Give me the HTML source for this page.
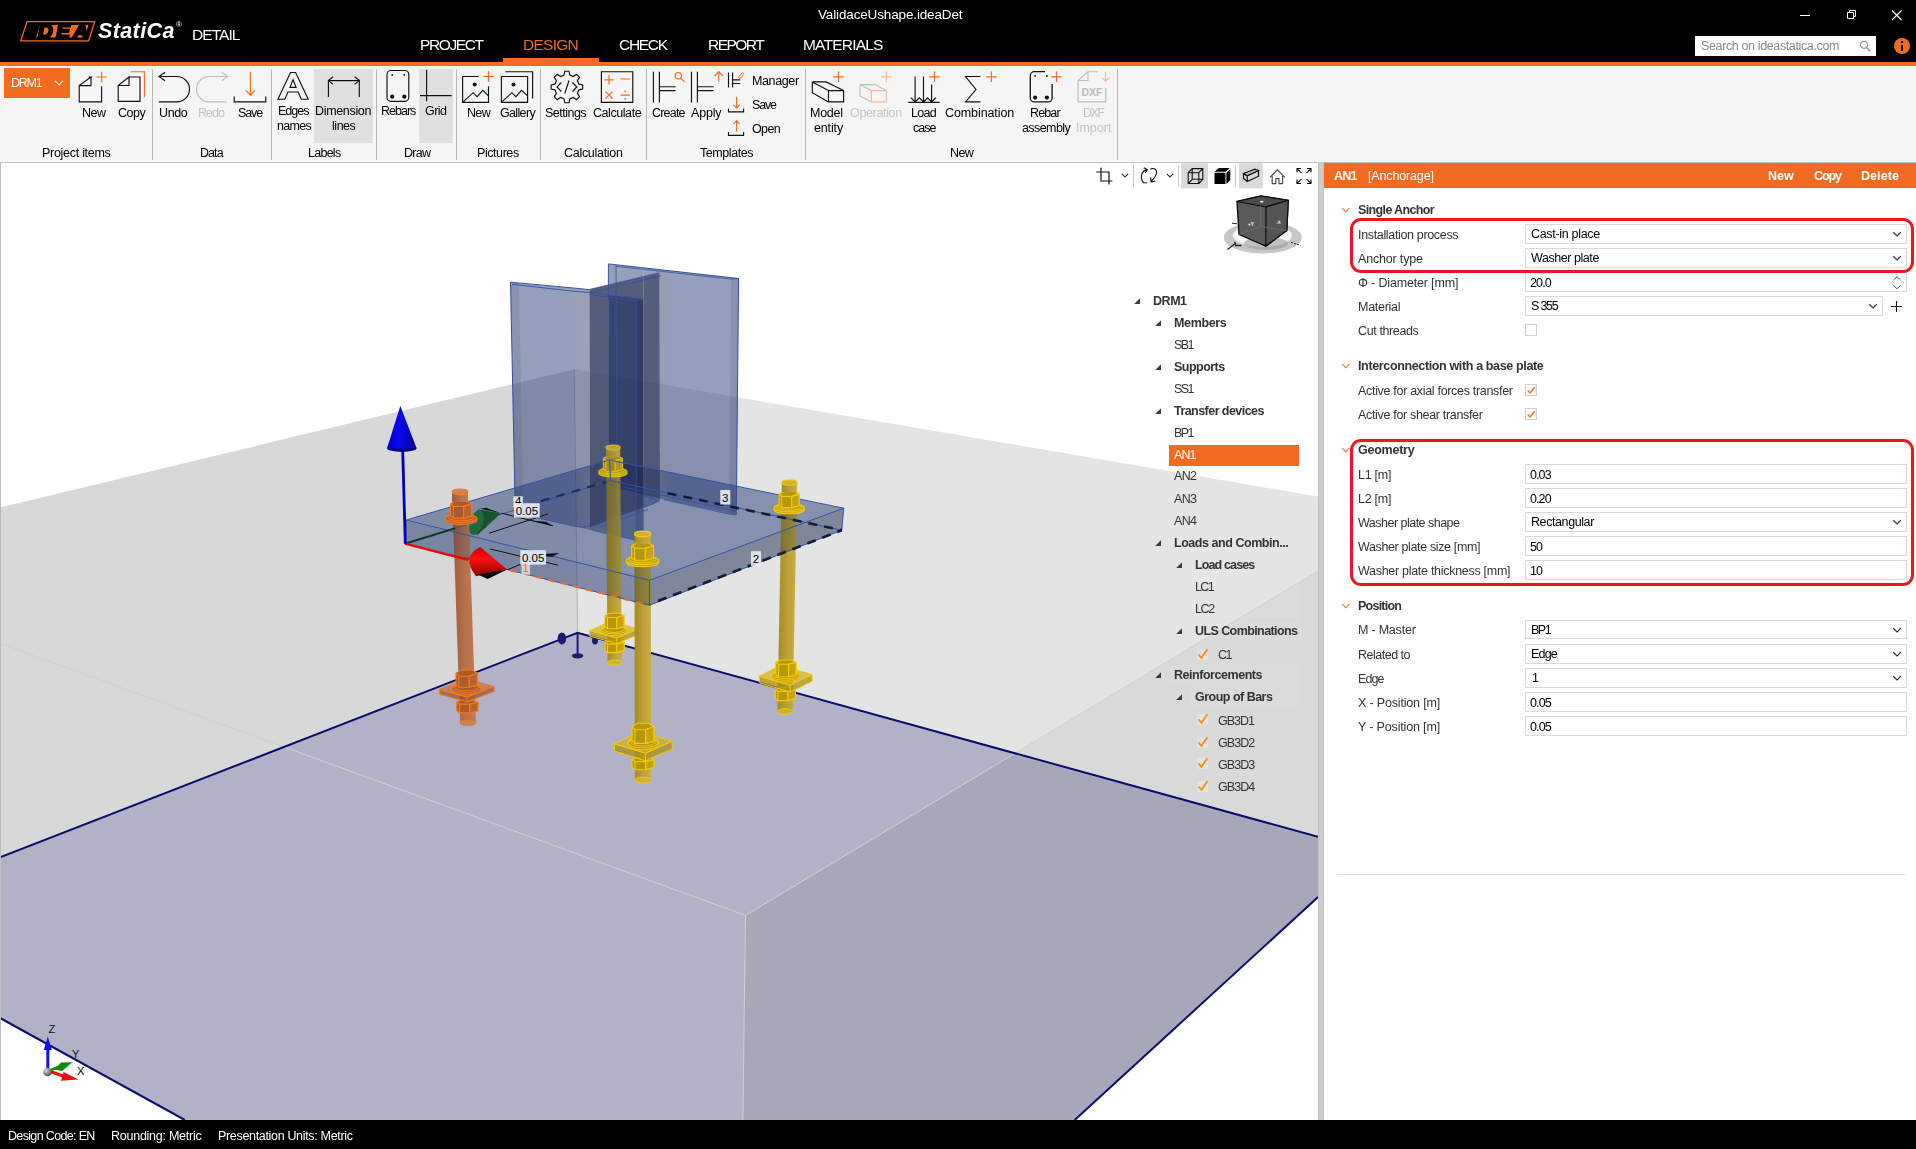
<!DOCTYPE html>
<html><head><meta charset="utf-8"><title>ValidaceUshape.ideaDet</title>
<style>
html,body{margin:0;padding:0;}
body{width:1916px;height:1149px;position:relative;overflow:hidden;background:#fff;font-family:"Liberation Sans", sans-serif;}
.t{position:absolute;white-space:nowrap;line-height:20px;height:20px;will-change:transform;}
.a{position:absolute;}
svg{position:absolute;overflow:visible;}
</style></head><body>
<div class="a" style="left:0;top:0;width:1916px;height:62px;background:#000"></div><div class="a" style="left:0;top:62px;width:1916px;height:4px;background:#F26B21"></div><div class="a" style="left:503px;top:58px;width:96px;height:5px;background:#F26B21"></div><div class="a" style="left:0;top:66px;width:1916px;height:95px;background:#F5F5F5"></div><div class="a" style="left:0;top:161px;width:1916px;height:1px;background:#FAFAFA"></div><div class="a" style="left:0;top:162px;width:1916px;height:1px;background:#BEBEBE"></div><div class="a" style="left:0;top:1120px;width:1916px;height:29px;background:#000;z-index:9"></div><div class="a" style="left:1318px;top:162px;width:6px;height:958px;background:#CDCDCD;border-left:1px solid #C2C2C2;border-right:1px solid #C2C2C2;box-sizing:border-box"></div><div class="a" style="left:0;top:163px;width:1px;height:957px;background:#BDBDBD;z-index:5"></div><svg style="left:18px;top:18px" width="80" height="28" viewBox="18 18 80 28">
<polygon points="27,21.600 94.800,21.600 88.600,40.800 20.800,40.800" fill="#000" stroke="#F26B21" stroke-width="1.300" stroke-linejoin="round"/>
<polygon points="40,25 88.500,25 84.500,37.500 36,37.500" fill="#F26B21"/>
</svg><svg style="left:1790px;top:0" width="126" height="32" viewBox="1790 0 126 32">
<path d="M1800 15.5h10" stroke="#fff" stroke-width="1" fill="none"/>
<path d="M1847.5 12.5h6v6h-6z M1849.5 12.5v-2h6v6h-2" stroke="#fff" stroke-width="1" fill="none"/>
<path d="M1892 10.5l9.5 9.5M1901.500 10.5l-9.5 9.5" stroke="#fff" stroke-width="1.1" fill="none"/>
</svg><div class="a" style="left:1695px;top:36px;width:181px;height:20px;background:#fff"></div><svg style="left:1856px;top:38px" width="18" height="16" viewBox="1856 38 18 16">
<circle cx="1864" cy="44.8" r="3.6" fill="none" stroke="#777" stroke-width="1"/><path d="M1866.700 47.6l3.600 3.700" stroke="#777" stroke-width="1.1"/></svg><div class="a" style="left:1893.600px;top:37.800px;width:16px;height:16px;border-radius:8px;background:#F26B21"></div><div class="a" style="left:1900.800px;top:41.300px;width:1.800px;height:2px;background:#000"></div><div class="a" style="left:1900.800px;top:44.600px;width:1.800px;height:6px;background:#000"></div><div class="a" style="left:4px;top:68px;width:66px;height:30px;background:#F26B21"></div><svg style="left:52px;top:78px" width="14" height="10" viewBox="52 78 14 10"><path d="M55 80.800l4 4 4-4" stroke="#fff" stroke-width="1.1" fill="none"/></svg><div class="a" style="left:151.5px;top:68.500px;width:1px;height:91px;background:#B8B8B8"></div><div class="a" style="left:270.5px;top:68.500px;width:1px;height:91px;background:#B8B8B8"></div><div class="a" style="left:375.9px;top:68.500px;width:1px;height:91px;background:#B8B8B8"></div><div class="a" style="left:455.5px;top:68.500px;width:1px;height:91px;background:#B8B8B8"></div><div class="a" style="left:539.5px;top:68.500px;width:1px;height:91px;background:#B8B8B8"></div><div class="a" style="left:645.5px;top:68.500px;width:1px;height:91px;background:#B8B8B8"></div><div class="a" style="left:804.9px;top:68.500px;width:1px;height:91px;background:#B8B8B8"></div><div class="a" style="left:1116.5px;top:68.500px;width:1px;height:91px;background:#B8B8B8"></div><div class="a" style="left:314px;top:69px;width:59px;height:74px;background:#E0E0E0"></div><div class="a" style="left:419px;top:69px;width:34px;height:74px;background:#E0E0E0"></div><div class="a" style="left:1324px;top:163px;width:592px;height:957px;background:#fff"></div><div class="a" style="left:1324px;top:163px;width:592px;height:25px;background:#F26B21"></div><svg style="left:1340px;top:203.8px" width="12" height="12" viewBox="0 0 12 12"><path d="M2.200 4.200l3.600 3.600 3.600-3.600" stroke="#F26B21" stroke-width="1.1" fill="none"/></svg><div class="a" style="left:1525px;top:224.0px;width:380px;height:17.500px;border:1px solid #DADADA;background:#fff"></div><svg style="left:1891.0px;top:228.0px" width="12" height="12" viewBox="0 0 12 12"><path d="M2.200 4.300l3.800 3.600 3.800-3.600" stroke="#333" stroke-width="1.2" fill="none"/></svg><div class="a" style="left:1525px;top:248.2px;width:380px;height:17.500px;border:1px solid #DADADA;background:#fff"></div><svg style="left:1891.0px;top:252.2px" width="12" height="12" viewBox="0 0 12 12"><path d="M2.200 4.300l3.800 3.600 3.800-3.600" stroke="#333" stroke-width="1.2" fill="none"/></svg><div class="a" style="left:1525px;top:272.3px;width:380px;height:17.500px;border:1px solid #DADADA;background:#fff"></div><svg style="left:1891px;top:273.8px" width="12" height="18" viewBox="0 0 12 18"><path d="M2.500 6l3.500-3.200 3.500 3.200M2.500 11.500l3.500 3.200 3.500-3.200" stroke="#555" stroke-width="1" fill="none"/></svg><div class="a" style="left:1525px;top:296.1px;width:356px;height:17.500px;border:1px solid #DADADA;background:#fff"></div><svg style="left:1866.8px;top:300.1px" width="12" height="12" viewBox="0 0 12 12"><path d="M2.200 4.300l3.800 3.600 3.800-3.600" stroke="#333" stroke-width="1.2" fill="none"/></svg><svg style="left:1890px;top:299.6px" width="13" height="13" viewBox="0 0 13 13"><path d="M6.500 1v11M1 6.500h11" stroke="#111" stroke-width="1.1"/></svg><div class="a" style="left:1525px;top:324.2px;width:10px;height:10px;border:1px solid #D0D0D0;background:#fff"></div><svg style="left:1340px;top:359.8px" width="12" height="12" viewBox="0 0 12 12"><path d="M2.200 4.200l3.600 3.600 3.600-3.600" stroke="#F26B21" stroke-width="1.1" fill="none"/></svg><div class="a" style="left:1525px;top:384.3px;width:10px;height:10px;border:1px solid #D0D0D0;background:#fff"></div><svg style="left:1525px;top:384.3px" width="12" height="12" viewBox="0 0 12 12"><path d="M2.600 6.400l2.400 2.600 4.600-5.800" stroke="#F26B21" stroke-width="1.4" fill="none"/></svg><div class="a" style="left:1525px;top:408.1px;width:10px;height:10px;border:1px solid #D0D0D0;background:#fff"></div><svg style="left:1525px;top:408.1px" width="12" height="12" viewBox="0 0 12 12"><path d="M2.600 6.400l2.400 2.600 4.600-5.800" stroke="#F26B21" stroke-width="1.4" fill="none"/></svg><svg style="left:1340px;top:443.5px" width="12" height="12" viewBox="0 0 12 12"><path d="M2.200 4.200l3.600 3.600 3.600-3.600" stroke="#F26B21" stroke-width="1.1" fill="none"/></svg><div class="a" style="left:1525px;top:464.3px;width:380px;height:17.500px;border:1px solid #DADADA;background:#fff"></div><div class="a" style="left:1525px;top:488.1px;width:380px;height:17.500px;border:1px solid #DADADA;background:#fff"></div><div class="a" style="left:1525px;top:512.2px;width:380px;height:17.500px;border:1px solid #DADADA;background:#fff"></div><svg style="left:1891.0px;top:516.2px" width="12" height="12" viewBox="0 0 12 12"><path d="M2.200 4.300l3.800 3.600 3.800-3.600" stroke="#333" stroke-width="1.2" fill="none"/></svg><div class="a" style="left:1525px;top:536.0px;width:380px;height:17.500px;border:1px solid #DADADA;background:#fff"></div><div class="a" style="left:1525px;top:560.1px;width:380px;height:17.500px;border:1px solid #DADADA;background:#fff"></div><svg style="left:1340px;top:599.7px" width="12" height="12" viewBox="0 0 12 12"><path d="M2.200 4.200l3.600 3.600 3.600-3.600" stroke="#F26B21" stroke-width="1.1" fill="none"/></svg><div class="a" style="left:1525px;top:619.9px;width:380px;height:17.500px;border:1px solid #DADADA;background:#fff"></div><svg style="left:1891.0px;top:623.9px" width="12" height="12" viewBox="0 0 12 12"><path d="M2.200 4.300l3.800 3.600 3.800-3.600" stroke="#333" stroke-width="1.2" fill="none"/></svg><div class="a" style="left:1525px;top:644.0px;width:380px;height:17.500px;border:1px solid #DADADA;background:#fff"></div><svg style="left:1891.0px;top:648.0px" width="12" height="12" viewBox="0 0 12 12"><path d="M2.200 4.300l3.800 3.600 3.800-3.600" stroke="#333" stroke-width="1.2" fill="none"/></svg><div class="a" style="left:1525px;top:668.2px;width:380px;height:17.500px;border:1px solid #DADADA;background:#fff"></div><svg style="left:1891.0px;top:672.2px" width="12" height="12" viewBox="0 0 12 12"><path d="M2.200 4.300l3.800 3.600 3.800-3.600" stroke="#333" stroke-width="1.2" fill="none"/></svg><div class="a" style="left:1525px;top:692.3px;width:380px;height:17.500px;border:1px solid #DADADA;background:#fff"></div><div class="a" style="left:1525px;top:716.3px;width:380px;height:17.500px;border:1px solid #DADADA;background:#fff"></div><div class="a" style="left:1338px;top:874px;width:567px;height:1px;background:#DADADA"></div><div class="a" style="left:1350px;top:218px;width:558px;height:49px;border:3px solid #EC1820;border-radius:11px;z-index:8"></div><div class="a" style="left:1350px;top:439px;width:558px;height:141px;border:3px solid #EC1820;border-radius:11px;z-index:8"></div><div class="a" style="left:1169px;top:445px;width:130px;height:21px;background:#F26B21;z-index:6"></div><div class="a" style="left:1148.4px;top:290.7px;width:150.6px;height:20px;background:rgba(255,255,255,0.06);z-index:5"></div><svg style="left:1133.3px;top:297.2px;z-index:6" width="8" height="8" viewBox="0 0 8 8"><path d="M7 1.200v5.800h-5.800z" fill="#3a3a3a"/></svg><div class="a" style="left:1169.3px;top:312.6px;width:129.7px;height:20px;background:rgba(255,255,255,0.06);z-index:5"></div><svg style="left:1154.2px;top:319.1px;z-index:6" width="8" height="8" viewBox="0 0 8 8"><path d="M7 1.200v5.800h-5.800z" fill="#3a3a3a"/></svg><div class="a" style="left:1169.3px;top:334.6px;width:129.7px;height:20px;background:rgba(255,255,255,0.06);z-index:5"></div><div class="a" style="left:1169.3px;top:356.8px;width:129.7px;height:20px;background:rgba(255,255,255,0.06);z-index:5"></div><svg style="left:1154.2px;top:363.3px;z-index:6" width="8" height="8" viewBox="0 0 8 8"><path d="M7 1.200v5.800h-5.800z" fill="#3a3a3a"/></svg><div class="a" style="left:1169.3px;top:378.6px;width:129.7px;height:20px;background:rgba(255,255,255,0.06);z-index:5"></div><div class="a" style="left:1169.3px;top:400.8px;width:129.7px;height:20px;background:rgba(255,255,255,0.06);z-index:5"></div><svg style="left:1154.2px;top:407.3px;z-index:6" width="8" height="8" viewBox="0 0 8 8"><path d="M7 1.200v5.800h-5.800z" fill="#3a3a3a"/></svg><div class="a" style="left:1169.3px;top:422.6px;width:129.7px;height:20px;background:rgba(255,255,255,0.06);z-index:5"></div><div class="a" style="left:1169.3px;top:444.6px;width:129.7px;height:20px;background:rgba(255,255,255,0.06);z-index:5"></div><div class="a" style="left:1169.3px;top:466.3px;width:129.7px;height:20px;background:rgba(255,255,255,0.06);z-index:5"></div><div class="a" style="left:1169.3px;top:488.5px;width:129.7px;height:20px;background:rgba(255,255,255,0.06);z-index:5"></div><div class="a" style="left:1169.3px;top:510.7px;width:129.7px;height:20px;background:rgba(255,255,255,0.06);z-index:5"></div><div class="a" style="left:1169.3px;top:532.6px;width:129.7px;height:20px;background:rgba(255,255,255,0.06);z-index:5"></div><svg style="left:1154.2px;top:539.1px;z-index:6" width="8" height="8" viewBox="0 0 8 8"><path d="M7 1.200v5.800h-5.800z" fill="#3a3a3a"/></svg><div class="a" style="left:1190.3px;top:554.8px;width:108.7px;height:20px;background:rgba(255,255,255,0.06);z-index:5"></div><svg style="left:1175.4px;top:561.3px;z-index:6" width="8" height="8" viewBox="0 0 8 8"><path d="M7 1.200v5.800h-5.800z" fill="#3a3a3a"/></svg><div class="a" style="left:1190.3px;top:576.8px;width:108.7px;height:20px;background:rgba(255,255,255,0.06);z-index:5"></div><div class="a" style="left:1190.3px;top:598.7px;width:108.7px;height:20px;background:rgba(255,255,255,0.06);z-index:5"></div><div class="a" style="left:1190.3px;top:620.6px;width:108.7px;height:20px;background:rgba(255,255,255,0.06);z-index:5"></div><svg style="left:1175.4px;top:627.1px;z-index:6" width="8" height="8" viewBox="0 0 8 8"><path d="M7 1.200v5.800h-5.800z" fill="#3a3a3a"/></svg><div class="a" style="left:1196.500px;top:648.5px;width:11px;height:11px;border-radius:2px;background:rgba(255,255,255,0.28);z-index:6"></div><svg style="left:1196px;top:646.5px;z-index:7" width="14" height="14" viewBox="0 0 14 14"><path d="M2.400 7.400l3 3.400 6-8.600" stroke="#FF8C00" stroke-width="1.700" fill="none"/></svg><div class="a" style="left:1169.3px;top:664.7px;width:129.7px;height:20px;background:rgba(255,255,255,0.06);z-index:5"></div><svg style="left:1154.2px;top:671.2px;z-index:6" width="8" height="8" viewBox="0 0 8 8"><path d="M7 1.200v5.800h-5.800z" fill="#3a3a3a"/></svg><div class="a" style="left:1190.3px;top:686.9px;width:108.7px;height:20px;background:rgba(255,255,255,0.06);z-index:5"></div><svg style="left:1175.4px;top:693.4px;z-index:6" width="8" height="8" viewBox="0 0 8 8"><path d="M7 1.200v5.800h-5.800z" fill="#3a3a3a"/></svg><div class="a" style="left:1196.500px;top:714.0px;width:11px;height:11px;border-radius:2px;background:rgba(255,255,255,0.28);z-index:6"></div><svg style="left:1196px;top:712.0px;z-index:7" width="14" height="14" viewBox="0 0 14 14"><path d="M2.400 7.400l3 3.400 6-8.600" stroke="#FF8C00" stroke-width="1.700" fill="none"/></svg><div class="a" style="left:1196.500px;top:736.7px;width:11px;height:11px;border-radius:2px;background:rgba(255,255,255,0.28);z-index:6"></div><svg style="left:1196px;top:734.7px;z-index:7" width="14" height="14" viewBox="0 0 14 14"><path d="M2.400 7.400l3 3.400 6-8.600" stroke="#FF8C00" stroke-width="1.700" fill="none"/></svg><div class="a" style="left:1196.500px;top:758.1px;width:11px;height:11px;border-radius:2px;background:rgba(255,255,255,0.28);z-index:6"></div><svg style="left:1196px;top:756.1px;z-index:7" width="14" height="14" viewBox="0 0 14 14"><path d="M2.400 7.400l3 3.400 6-8.600" stroke="#FF8C00" stroke-width="1.700" fill="none"/></svg><div class="a" style="left:1196.500px;top:780.6px;width:11px;height:11px;border-radius:2px;background:rgba(255,255,255,0.28);z-index:6"></div><svg style="left:1196px;top:778.6px;z-index:7" width="14" height="14" viewBox="0 0 14 14"><path d="M2.400 7.400l3 3.400 6-8.600" stroke="#FF8C00" stroke-width="1.700" fill="none"/></svg><svg style="left:0;top:66px" width="1200" height="96" viewBox="0 66 1200 96"><path d="M88.500 77H92.300 M91 77L79.200 85.600V101.900H101.600V86.200 M91 77V85.600H79.200" stroke="#111" stroke-width="1.15" fill="none" /><path d="M96.39999999999999 77H106.8M101.6 71.8V82.2" stroke="#F26B21" stroke-width="1.15" fill="none" /><path d="M129 77H140V101.300H118.200V85.500L129 77V85.500H118.200" stroke="#111" stroke-width="1.15" fill="none" /><path d="M130.700 71.700H144.400V97.600" stroke="#F26B21" stroke-width="1.15" fill="none" /><path d="M159 76.500H176.800A12.700 12.700 0 0 1 176.800 101.900H158.700 M165 72.200L159 76.500L165 80.800" stroke="#111" stroke-width="1.15" fill="none" /><path d="M227.800 76.500H209.200A12.700 12.700 0 0 0 209.200 101.900H227 M221.800 72.200L227.800 76.500L221.800 80.800" stroke="#BDBDBD" stroke-width="1.15" fill="none" /><path d="M234.200 96.400V101.900H265.800V96.400" stroke="#111" stroke-width="1.15" fill="none" /><path d="M250.400 71.700V95.100M245.900 90.300L250.400 95.100L254.900 90.300" stroke="#F26B21" stroke-width="1.15" fill="none" /><path d="M277.900 99.200L290.500 72.500H295.600L308.200 99.200H301.300L298.200 92H287.900L284.800 99.200Z M290 87.400L293.050 79.600L296.100 87.400Z" stroke="#111" stroke-width="1.15" fill="none" /><path d="M328.400 79.800V97.100M359.300 79.800V97.100M328.400 80.600H359.300M333 76.800L328.400 80.600L333 84.400M354.700 76.800L359.300 80.600L354.700 84.400" stroke="#111" stroke-width="1.15" fill="none" /><path d="M391 70.500H404.800A4 4 0 0 1 408.800 74.500V97.300A4 4 0 0 1 404.800 101.300H391A4 4 0 0 1 387 97.300V74.500A4 4 0 0 1 391 70.500Z" stroke="#111" stroke-width="1.15" fill="none" /><circle cx="392.2" cy="74.900" r="0.9" fill="#111"/><circle cx="392.2" cy="96.700" r="2.100" fill="#111"/><circle cx="404.3" cy="74.900" r="0.9" fill="#111"/><circle cx="404.3" cy="96.700" r="2.100" fill="#111"/><path d="M426.600 70V101.300M420 95.600H451.700" stroke="#111" stroke-width="1.15" fill="none" /><path d="M478.700 76.500H462.600V102.400H488.500V86.200M463.400 101.600L473.100 92.700L477.100 96.700L482.800 90.300L488.500 95.900" stroke="#111" stroke-width="1.15" fill="none" /><circle cx="474.700" cy="84.600" r="2" fill="#111"/><path d="M483.3 76.5H493.7M488.5 71.3V81.7" stroke="#F26B21" stroke-width="1.15" fill="none" /><path d="M501.400 76.500H527.600V102.400H501.400ZM505.400 71.700H532.600V98.400M502.200 101.600L511.900 92.700L515.900 96.700L521.600 90.300L527.600 95.900" stroke="#111" stroke-width="1.15" fill="none" /><circle cx="513.500" cy="84.600" r="2" fill="#111"/><path d="M564.03 75.04L564.78 71.24L569.02 71.24L569.77 75.04L573.33 76.51L576.55 74.36L579.54 77.35L577.39 80.57L578.86 84.13L582.66 84.88L582.66 89.12L578.86 89.87L577.39 93.43L579.54 96.65L576.55 99.64L573.33 97.49L569.77 98.96L569.02 102.76L564.78 102.76L564.03 98.96L560.47 97.49L557.25 99.64L554.26 96.65L556.41 93.43L554.94 89.87L551.14 89.12L551.14 84.88L554.94 84.13L556.41 80.57L554.26 77.35L557.25 74.36L560.47 76.51Z" stroke="#111" stroke-width="1.15" fill="none" /><path d="M561.300 82.500L557 87L561.300 91.500M572.500 82.500L576.800 87L572.500 91.500M569 80.500L564.800 93.500" stroke="#111" stroke-width="1.15" fill="none" /><path d="M601.400 71.700H632.800V102.400H601.400Z" stroke="#111" stroke-width="1.15" fill="none" /><path d="M604.300 79.800H613.700M609 75.100V84.500M620.500 79H629.900M605.600 91.700L612.400 98.500M612.400 91.700L605.600 98.500M620.500 95.100H629.900" stroke="#F26B21" stroke-width="1.15" fill="none" /><circle cx="625.200" cy="91.300" r="0.9" fill="#F26B21"/><circle cx="625.200" cy="98.900" r="0.9" fill="#F26B21"/><path d="M653.400 71.700V102.400M659.400 71.700V102.400M659.400 86.700H675.600M659.400 90.600H675.600" stroke="#111" stroke-width="1.15" fill="none" /><circle cx="678.300" cy="75.700" r="3.200" fill="none" stroke="#F26B21" stroke-width="1.15"/><path d="M680.600 78L684.500 81.800" stroke="#F26B21" stroke-width="1.15" fill="none" /><path d="M691.500 71.700V102.400M697.400 71.700V102.400M697.400 86.700H713.600M697.400 90.600H713.600" stroke="#111" stroke-width="1.15" fill="none" /><path d="M718.800 81.400V71.700M714.700 76L718.800 71.700L722.900 76" stroke="#F26B21" stroke-width="1.15" fill="none" /><path d="M728.500 72.500V87.500M732.600 72.500V87.500M732.600 79.800H740.300M732.600 83.500H740.300" stroke="#111" stroke-width="1.15" fill="none" /><path d="M738.300 77.300L742.300 72.800L744 74.300L740 78.700Z" stroke="#F26B21" stroke-width="1" fill="none" /><path d="M728.500 108.400V111.800H743.600V108.400" stroke="#111" stroke-width="1.15" fill="none" /><path d="M736.600 96.700V108.100M733.400 104.700L736.600 108.100L739.800 104.700" stroke="#F26B21" stroke-width="1.15" fill="none" /><path d="M728.500 132V135.300H743.600V132" stroke="#111" stroke-width="1.15" fill="none" /><path d="M736.600 131.500V120.700M733.400 124.100L736.600 120.700L739.800 124.100" stroke="#F26B21" stroke-width="1.15" fill="none" /><path d="M828.500 90.600H843.600V101.900H828.500ZM828.500 90.600L812.300 81.900H826.100L843.600 90.600M812.300 81.900V92.700L828.500 101.900" stroke="#111" stroke-width="1.15" fill="none" /><path d="M833.3 76.8H843.7M838.5 71.6V82.0" stroke="#F26B21" stroke-width="1.15" fill="none" /><path d="M871.400 90.600L860 84.600H875L886.400 90.600M860 84.600V95.900L871.400 101.900" stroke="#BDBDBD" stroke-width="1.15" fill="none" /><path d="M871.400 90.600H886.400V101.900H871.400Z" stroke="#F8B998" stroke-width="1.15" fill="none" /><path d="M881.1999999999999 76.8H891.6M886.4 71.6V82.0" stroke="#F8B998" stroke-width="1.15" fill="none" /><path d="M908.300 102.400H939.700M915.100 76.500V102M923.500 76.500V102M931.600 84.600V102M910.800 97.600L915.100 102L919.300 97.800L923.500 102L927.600 97.800L931.600 102L935.900 97.600" stroke="#111" stroke-width="1.15" fill="none" /><path d="M929.3 76.8H939.7M934.5 71.6V82.0" stroke="#F26B21" stroke-width="1.15" fill="none" /><path d="M980.400 76.500H965.500L976 89.500L965.500 101.900H980.400" stroke="#111" stroke-width="1.15" fill="none" /><path d="M986.1999999999999 76.8H996.6M991.4 71.6V82.0" stroke="#F26B21" stroke-width="1.15" fill="none" /><path d="M1052.100 84V97.900A4 4 0 0 1 1048.100 101.900H1034.300A4 4 0 0 1 1030.300 97.900V75.700A4 4 0 0 1 1034.300 71.700H1045" stroke="#111" stroke-width="1.3" fill="none" /><circle cx="1035.1" cy="76" r="0.9" fill="#111"/><circle cx="1035.1" cy="97.600" r="2.100" fill="#111"/><circle cx="1046.9" cy="76" r="0.9" fill="#111"/><circle cx="1046.9" cy="97.600" r="2.100" fill="#111"/><path d="M1051.3 76.8H1061.7M1056.5 71.6V82.0" stroke="#F26B21" stroke-width="1.15" fill="none" /><path d="M1098 71.700H1088L1078 80.500V101.900H1105.800V88M1088 71.700V80.500H1078" stroke="#BDBDBD" stroke-width="1.15" fill="none" /><path d="M1105.500 71.700V81.400M1101.800 77.600L1105.500 81.400L1109.200 77.600" stroke="#F8B998" stroke-width="1.15" fill="none" /><text x="1092" y="96" font-size="10.500" font-weight="700" fill="#BDBDBD" text-anchor="middle" font-family="Liberation Sans, sans-serif" textLength="21" lengthAdjust="spacingAndGlyphs">DXF</text></svg><svg style="left:1090px;top:163px;z-index:6" width="228" height="100" viewBox="1090 163 228 100"><rect x="1181.200" y="163.300" width="26.800" height="25.200" fill="#D9D9D9"/><rect x="1239" y="163.300" width="23.800" height="25.200" fill="#D9D9D9"/><rect x="1133.0" y="165" width="1" height="22" fill="#C4C4C4"/><rect x="1178.1" y="165" width="1" height="22" fill="#C4C4C4"/><rect x="1234.9" y="165" width="1" height="22" fill="#C4C4C4"/><path d="M1101 167.800V181H1112.300M1096.300 172H1109V184.600" stroke="#111" stroke-width="1.2" fill="none" /><path d="M1121.800 173.800L1125 177L1128.200 173.800" stroke="#333" stroke-width="1.1" fill="none" /><path d="M1147 169.600C1141 171 1139.800 178.500 1143.500 182.800L1147.300 182.800M1143.800 167.800L1147.400 169.600L1145.200 172.800" stroke="#111" stroke-width="1.1" fill="none" /><path d="M1150.200 169.300C1153.500 167.300 1157.300 169.300 1156.500 173.500C1155.800 177 1152.500 179.500 1151.200 181.600M1150.700 177.300L1151 181.900L1155.300 181.300" stroke="#111" stroke-width="1.1" fill="none" /><path d="M1166.800 173.800L1170 177L1173.200 173.800" stroke="#333" stroke-width="1.1" fill="none" /><path d="M1188.200 172.700H1198.800V183.500H1188.200ZM1188.200 172.700L1192.200 168.600H1202.800V179.300L1198.800 183.500M1198.800 172.700L1202.800 168.600M1192.200 168.600V179.300H1202.800M1192.200 179.300L1188.200 183.500" stroke="#111" stroke-width="1.1" fill="none" /><path d="M1214.500 172.700H1225.500V184H1214.500Z M1214.500 171.800L1218.800 168H1229.800L1225.500 171.800Z M1226.400 172.700L1230.300 169V180L1226.400 184Z" fill="#000"/><path d="M1243.500 173.500L1258.500 170.500V176.200L1247.200 181.500L1243.500 178.500ZM1243.500 173.500L1247.200 175.800V181.500M1247.200 175.800L1258.500 170.500" stroke="#111" stroke-width="1.2" fill="rgba(255,255,255,0.0)" /><path d="M1243.500 173.500L1254.800 169.200L1258.500 170.500L1247.200 175.800Z" fill="#bbb" stroke="#111" stroke-width="1.100"/><path d="M1270 177.300L1277.400 169.800L1284.800 177.300M1272.200 176V183.600H1275.800V178.600H1279V183.600H1282.600V176" stroke="#444" stroke-width="1.1" fill="none" /><path d="M1297 172.500V168.500H1301M1297 168.500L1301.300 172.800M1307 168.500H1311V172.500M1311 168.500L1306.700 172.800M1297 179.500V183.500H1301M1297 183.500L1301.300 179.200M1311 179.500V183.500H1307M1311 183.500L1306.700 179.200" stroke="#111" stroke-width="1.15" fill="none" /><ellipse cx="1262.800" cy="237.500" rx="39" ry="16" fill="url(#vcS)"/><defs><radialGradient id="vcS" cx="0.5" cy="0.5" r="0.5"><stop offset="0" stop-color="#8a8a8a"/><stop offset="0.6" stop-color="#a8a8a8"/><stop offset="0.8" stop-color="#c4c4c4"/><stop offset="1" stop-color="#d2d2d2"/></radialGradient></defs><ellipse cx="1262.800" cy="237.500" rx="38.800" ry="15.700" fill="#C6C6C6"/><ellipse cx="1262.500" cy="235.200" rx="29.500" ry="11.800" fill="#F4F4F4"/><ellipse cx="1266" cy="243.500" rx="22" ry="6.500" fill="rgba(150,150,150,0.55)"/><path d="M1237 201.500L1260.800 196L1288.300 200.300L1286.800 230.500L1265.800 246.200L1239 234.500Z" fill="#5A5A5A" stroke="#0c0c0c" stroke-width="1.300" stroke-linejoin="round"/><path d="M1237 201.500L1260.800 196L1288.300 200.300L1266 207Z" fill="#4C4C4C" stroke="#0c0c0c" stroke-width="1.200" stroke-linejoin="round"/><path d="M1266 207L1288.300 200.300L1286.800 230.500L1265.800 246.200Z" fill="#545454" stroke="#0c0c0c" stroke-width="1.200" stroke-linejoin="round"/><path d="M1260.500 206L1260.800 226.500M1260.800 226.500L1239 234.500M1260.800 226.500L1286.800 230.500" stroke="#707070" stroke-width="0.8" fill="none"/><ellipse cx="1261.700" cy="201.600" rx="1.800" ry="0.9" fill="#fff"/><text x="1248" y="225.500" font-size="4.800" font-weight="700" fill="#fff" font-family="Liberation Sans, sans-serif">+Y</text><text x="1276.500" y="224" font-size="4.500" font-weight="700" fill="#fff" font-family="Liberation Sans, sans-serif" transform="rotate(-8 1278 224)">-X</text><path d="M1227.500 249.500L1236 243M1234.500 242L1235.800 245.500L1241.500 245.500" stroke="#222" stroke-width="1.3" fill="none" /><path d="M1291 242.300L1300.500 245.500" stroke="#222" stroke-width="1" fill="none" stroke-dasharray="2 1.200"/><path d="M1232 223.200L1237 223.800" stroke="#222" stroke-width="1" fill="none" /></svg><svg style="left:30px;top:1015px;z-index:6" width="70" height="80" viewBox="30 1015 70 80"><defs><radialGradient id="ball" cx="0.35" cy="0.35" r="0.7"><stop offset="0" stop-color="#ddd"/><stop offset="1" stop-color="#444"/></radialGradient></defs><rect x="46.300" y="1048" width="3" height="23" fill="#1010F0"/><path d="M47.800 1036.500L43.800 1050H51.800Z" fill="#1010F0"/><path d="M49 1071L63 1076" stroke="#F01010" stroke-width="3" fill="none"/><path d="M78.500 1079.500L63.500 1072L61 1080.800Z" fill="#F01010"/><path d="M49 1071L58 1067" stroke="#109010" stroke-width="3" fill="none"/><path d="M72.500 1062.200L61 1062.500L54.500 1069.500L62 1071Z" fill="#0A8A14"/><circle cx="47.500" cy="1072" r="4.300" fill="url(#ball)"/><text x="48.5" y="1032.5" font-size="11" fill="#111" font-family="Liberation Sans, sans-serif">Z</text><text x="72" y="1058" font-size="11" fill="#111" font-family="Liberation Sans, sans-serif">Y</text><text x="77" y="1075" font-size="11" fill="#111" font-family="Liberation Sans, sans-serif">X</text></svg><svg style="left:0;top:163px" width="1318" height="957" viewBox="0 163 1318 957"><g clip-path="url(#vp)"><clipPath id="vp"><rect x="0" y="163" width="1318" height="957"/></clipPath><defs>
<linearGradient id="gO" x1="0" x2="1" y1="0" y2="0"><stop offset="0" stop-color="#A05A38"/><stop offset="0.55" stop-color="#B8724A"/><stop offset="1" stop-color="#C27C52"/></linearGradient>
<linearGradient id="gY" x1="0" x2="1" y1="0" y2="0"><stop offset="0" stop-color="#A58A22"/><stop offset="0.55" stop-color="#BDA236"/><stop offset="1" stop-color="#C9AE44"/></linearGradient>
<linearGradient id="gYd" x1="0" x2="1" y1="0" y2="0"><stop offset="0" stop-color="#8E7A20"/><stop offset="0.55" stop-color="#A08A2A"/><stop offset="1" stop-color="#AE9836"/></linearGradient>
<linearGradient id="gB" x1="0" x2="1" y1="0" y2="0"><stop offset="0" stop-color="#0000C8"/><stop offset="0.4" stop-color="#0808F0"/><stop offset="1" stop-color="#000090"/></linearGradient>
<linearGradient id="gR" x1="0" x2="0" y1="0" y2="1"><stop offset="0" stop-color="#C80000"/><stop offset="0.4" stop-color="#FF1010"/><stop offset="1" stop-color="#8A0000"/></linearGradient>
<linearGradient id="gFl" x1="0" x2="1" y1="0" y2="0"><stop offset="0" stop-color="rgba(25,47,108,0.46)"/><stop offset="0.72" stop-color="rgba(25,47,108,0.46)"/><stop offset="1" stop-color="rgba(60,70,100,0.50)"/></linearGradient>
<linearGradient id="gFr" x1="0" x2="1" y1="0" y2="0"><stop offset="0" stop-color="rgba(60,70,100,0.52)"/><stop offset="0.18" stop-color="rgba(25,47,108,0.46)"/><stop offset="1" stop-color="rgba(25,47,108,0.46)"/></linearGradient>
<radialGradient id="gShadow"><stop offset="0.55" stop-color="rgba(120,120,120,0.55)"/><stop offset="1" stop-color="rgba(160,160,160,0)"/></radialGradient>
</defs><polygon points="0.0,507.5 574.2,369.3 577.6,632.7 0.0,857.4" fill="#D8D8D8" stroke="none" stroke-width="1" /><polygon points="574.2,369.3 1318.0,496.5 1318.0,836.8 577.6,632.7" fill="#E4E4E4" stroke="none" stroke-width="1" /><polygon points="1015.0,753.3 1318.0,571.0 1318.0,836.8" fill="#D9D9D9" stroke="none" stroke-width="1" /><line x1="574.2" y1="369.3" x2="577.6" y2="632.7" stroke="#B4B4B8" stroke-width="1" /><polygon points="577.6,632.7 1318.0,836.8 1318.0,897.1 1074.7,1120.0 184.8,1120.0 0.0,1018.0 0.0,857.4" fill="#B2B1C6" stroke="none" stroke-width="1" /><polygon points="1015.0,753.3 1318.0,836.8 1318.0,897.1 1074.7,1120.0 742.9,1120.0 745.5,915.4" fill="#A8A7B9" stroke="none" stroke-width="1" /><line x1="0.0" y1="643.3" x2="745.5" y2="915.4" stroke="#D0D0CC" stroke-width="1" /><line x1="745.5" y1="915.4" x2="1318.0" y2="571.0" stroke="#D0D0CC" stroke-width="1" /><line x1="745.5" y1="915.4" x2="742.9" y2="1120.0" stroke="#D0D0CC" stroke-width="1" /><polyline points="0,857.400 577.600,632.700 1318,836.800" fill="none" stroke="#0C0C6C" stroke-width="2"/><line x1="0.0" y1="1018.0" x2="184.8" y2="1120.0" stroke="#0C0C6C" stroke-width="2" /><line x1="1318.0" y1="897.1" x2="1074.7" y2="1120.0" stroke="#0C0C6C" stroke-width="2" /><line x1="577.6" y1="632.7" x2="577.6" y2="655.4" stroke="#1B1B6F" stroke-width="2" /><ellipse cx="577.6" cy="655.8" rx="5.7" ry="2.6" fill="#1B1B6F" stroke="none" stroke-width="1" /><ellipse cx="561.9" cy="638.6" rx="4.3" ry="6.0" fill="#1B1B6F" stroke="none" stroke-width="1" /><ellipse cx="595.0" cy="640.4" rx="3.0" ry="4.0" fill="#1B1B6F" stroke="none" stroke-width="1" /><polygon points="606.0,447.6 620.2,447.6 621.7,662.6 607.5,662.6" fill="url(#gY)" stroke="none" stroke-width="1" /><ellipse cx="614.6" cy="662.6" rx="7.1" ry="2.6" fill="#CDB040" stroke="#F5CC00" stroke-width="1" /><polygon points="605.1,642.3 609.7,640.6 619.5,640.6 624.1,642.5 624.1,650.6 616.9,652.6 607.6,652.6 605.1,650.5" fill="#B4960F" stroke="#F5CC00" stroke-width="1.1" stroke-linejoin="round"/><polyline points="605.1,642.3 607.6,644.1 616.9,644.1 624.1,642.5" fill="none" stroke="#F5CC00" stroke-width="1.1"/><line x1="607.6" y1="644.1" x2="607.6" y2="652.6" stroke="#F5CC00" stroke-width="1.1" /><line x1="616.9" y1="644.1" x2="616.9" y2="652.6" stroke="#F5CC00" stroke-width="1.1" /><polygon points="616.9,644.1 624.1,642.5 624.1,650.6 616.9,652.6" fill="#C4A414" stroke="#F5CC00" stroke-width="1.1" /><polygon points="589.3,630.6 616.7,638.0 638.6,628.8 639.0,634.3 616.7,643.5 589.7,636.1" fill="rgba(170,142,20,0.74)" stroke="#F5CC00" stroke-width="1" /><polygon points="589.3,630.6 611.2,621.4 638.6,628.8 616.7,638.0" fill="rgba(204,174,30,0.68)" stroke="#F5CC00" stroke-width="1" /><line x1="616.7" y1="638.0" x2="616.7" y2="643.5" stroke="#F5CC00" stroke-width="1" /><ellipse cx="614.0" cy="631.0" rx="13.3" ry="4.5" fill="rgba(170,142,20,0.74)" stroke="#F5CC00" stroke-width="1" /><ellipse cx="614.0" cy="629.3" rx="13.3" ry="4.5" fill="none" stroke="#F5CC00" stroke-width="1" /><ellipse cx="614.0" cy="628.6" rx="11.3" ry="3.8" fill="none" stroke="#F5CC00" stroke-width="0.9" /><polygon points="604.9,615.4 609.5,613.3 619.3,613.3 623.9,615.6 623.9,626.8 616.7,628.8 607.4,628.8 604.9,626.7" fill="#B4960F" stroke="#F5CC00" stroke-width="1.1" stroke-linejoin="round"/><polyline points="604.9,615.4 607.4,617.5 616.7,617.5 623.9,615.6" fill="none" stroke="#F5CC00" stroke-width="1.1"/><line x1="607.4" y1="617.5" x2="607.4" y2="628.8" stroke="#F5CC00" stroke-width="1.1" /><line x1="616.7" y1="617.5" x2="616.7" y2="628.8" stroke="#F5CC00" stroke-width="1.1" /><polygon points="616.7,617.5 623.9,615.6 623.9,626.8 616.7,628.8" fill="#C4A414" stroke="#F5CC00" stroke-width="1.1" /><polygon points="781.9,482.6 797.1,482.6 792.6,711.5 777.4,711.5" fill="url(#gY)" stroke="none" stroke-width="1" /><ellipse cx="785.0" cy="711.5" rx="7.6" ry="2.8" fill="#CDB040" stroke="#F5CC00" stroke-width="1" /><polygon points="775.3,689.5 780.1,687.6 790.7,687.6 795.5,689.7 795.5,698.5 787.9,700.6 777.9,700.6 775.3,698.3" fill="#B4960F" stroke="#F5CC00" stroke-width="1.1" stroke-linejoin="round"/><polyline points="775.3,689.5 777.9,691.4 787.9,691.4 795.5,689.7" fill="none" stroke="#F5CC00" stroke-width="1.1"/><line x1="777.9" y1="691.4" x2="777.9" y2="700.6" stroke="#F5CC00" stroke-width="1.1" /><line x1="787.9" y1="691.4" x2="787.9" y2="700.6" stroke="#F5CC00" stroke-width="1.1" /><polygon points="787.9,691.4 795.5,689.7 795.5,698.5 787.9,700.6" fill="#C4A414" stroke="#F5CC00" stroke-width="1.1" /><polygon points="759.1,676.2 790.2,685.3 811.9,674.4 812.4,681.1 790.2,692.0 759.6,682.9" fill="rgba(170,142,20,0.74)" stroke="#F5CC00" stroke-width="1" /><polygon points="759.1,676.2 780.8,665.3 811.9,674.4 790.2,685.3" fill="rgba(204,174,30,0.68)" stroke="#F5CC00" stroke-width="1" /><line x1="790.2" y1="685.3" x2="790.2" y2="692.0" stroke="#F5CC00" stroke-width="1" /><ellipse cx="785.5" cy="676.6" rx="14.2" ry="5.4" fill="rgba(170,142,20,0.74)" stroke="#F5CC00" stroke-width="1" /><ellipse cx="785.5" cy="674.9" rx="14.2" ry="5.4" fill="none" stroke="#F5CC00" stroke-width="1" /><ellipse cx="785.5" cy="674.2" rx="12.0" ry="4.5" fill="none" stroke="#F5CC00" stroke-width="0.9" /><polygon points="775.9,662.1 780.7,660.0 791.3,660.0 796.1,662.4 796.1,674.7 788.5,676.8 778.5,676.8 775.9,674.5" fill="#B4960F" stroke="#F5CC00" stroke-width="1.1" stroke-linejoin="round"/><polyline points="775.9,662.1 778.5,664.3 788.5,664.3 796.1,662.4" fill="none" stroke="#F5CC00" stroke-width="1.1"/><line x1="778.5" y1="664.3" x2="778.5" y2="676.8" stroke="#F5CC00" stroke-width="1.1" /><line x1="788.5" y1="664.3" x2="788.5" y2="676.8" stroke="#F5CC00" stroke-width="1.1" /><polygon points="788.5,664.3 796.1,662.4 796.1,674.7 788.5,676.8" fill="#C4A414" stroke="#F5CC00" stroke-width="1.1" /><polygon points="452.1,491.8 467.9,491.8 475.9,722.9 460.1,722.9" fill="url(#gO)" stroke="none" stroke-width="1" /><ellipse cx="468.0" cy="722.9" rx="8.0" ry="2.9" fill="#C5845A" stroke="#F67A22" stroke-width="1" /><polygon points="456.7,702.1 461.8,700.1 472.8,700.1 477.9,702.3 477.9,710.7 469.9,712.9 459.5,712.9 456.7,710.5" fill="#A9592A" stroke="#F67A22" stroke-width="1.1" stroke-linejoin="round"/><polyline points="456.7,702.1 459.5,704.1 469.9,704.1 477.9,702.3" fill="none" stroke="#F67A22" stroke-width="1.1"/><line x1="459.5" y1="704.1" x2="459.5" y2="712.9" stroke="#F67A22" stroke-width="1.1" /><line x1="469.9" y1="704.1" x2="469.9" y2="712.9" stroke="#F67A22" stroke-width="1.1" /><polygon points="469.9,704.1 477.9,702.3 477.9,710.7 469.9,712.9" fill="#B4622E" stroke="#F67A22" stroke-width="1.1" /><polygon points="439.3,689.4 467.0,697.0 493.9,686.4 494.4,691.3 467.0,701.9 439.8,694.3" fill="rgba(160,80,40,0.72)" stroke="#F67A22" stroke-width="1" /><polygon points="439.3,689.4 466.2,678.8 493.9,686.4 467.0,697.0" fill="rgba(198,106,50,0.66)" stroke="#F67A22" stroke-width="1" /><line x1="467.0" y1="697.0" x2="467.0" y2="701.9" stroke="#F67A22" stroke-width="1" /><ellipse cx="466.6" cy="689.3" rx="14.9" ry="4.9" fill="rgba(160,80,40,0.72)" stroke="#F67A22" stroke-width="1" /><ellipse cx="466.6" cy="687.5" rx="14.9" ry="4.9" fill="none" stroke="#F67A22" stroke-width="1" /><ellipse cx="466.6" cy="686.7" rx="12.6" ry="4.1" fill="none" stroke="#F67A22" stroke-width="0.9" /><polygon points="456.0,673.1 461.1,669.9 472.1,669.9 477.2,673.3 477.2,685.1 469.2,687.3 458.8,687.3 456.0,684.9" fill="#A9592A" stroke="#F67A22" stroke-width="1.1" stroke-linejoin="round"/><polyline points="456.0,673.1 458.8,676.3 469.2,676.3 477.2,673.3" fill="none" stroke="#F67A22" stroke-width="1.1"/><line x1="458.8" y1="676.3" x2="458.8" y2="687.3" stroke="#F67A22" stroke-width="1.1" /><line x1="469.2" y1="676.3" x2="469.2" y2="687.3" stroke="#F67A22" stroke-width="1.1" /><polygon points="469.2,676.3 477.2,673.3 477.2,685.1 469.2,687.3" fill="#B4622E" stroke="#F67A22" stroke-width="1.1" /><polygon points="634.5,534.0 650.8,534.0 651.1,780.2 634.9,780.2" fill="url(#gY)" stroke="none" stroke-width="1" /><ellipse cx="643.0" cy="780.2" rx="8.2" ry="3.0" fill="#CDB040" stroke="#F5CC00" stroke-width="1" /><polygon points="632.1,759.5 637.4,757.5 648.6,757.5 653.9,759.7 653.9,767.4 645.7,769.7 635.0,769.7 632.1,767.2" fill="#B4960F" stroke="#F5CC00" stroke-width="1.1" stroke-linejoin="round"/><polyline points="632.1,759.5 635.0,761.6 645.7,761.6 653.9,759.7" fill="none" stroke="#F5CC00" stroke-width="1.1"/><line x1="635.0" y1="761.6" x2="635.0" y2="769.7" stroke="#F5CC00" stroke-width="1.1" /><line x1="645.7" y1="761.6" x2="645.7" y2="769.7" stroke="#F5CC00" stroke-width="1.1" /><polygon points="645.7,761.6 653.9,759.7 653.9,767.4 645.7,769.7" fill="#C4A414" stroke="#F5CC00" stroke-width="1.1" /><polygon points="614.1,743.7 645.5,753.2 671.9,741.4 672.4,748.9 645.5,760.7 614.6,751.2" fill="rgba(170,142,20,0.74)" stroke="#F5CC00" stroke-width="1" /><polygon points="614.1,743.7 640.5,731.9 671.9,741.4 645.5,753.2" fill="rgba(204,174,30,0.68)" stroke="#F5CC00" stroke-width="1" /><line x1="645.5" y1="753.2" x2="645.5" y2="760.7" stroke="#F5CC00" stroke-width="1" /><ellipse cx="643.0" cy="744.0" rx="15.3" ry="5.8" fill="rgba(170,142,20,0.74)" stroke="#F5CC00" stroke-width="1" /><ellipse cx="643.0" cy="742.1" rx="15.3" ry="5.8" fill="none" stroke="#F5CC00" stroke-width="1" /><ellipse cx="643.0" cy="741.3" rx="12.9" ry="4.8" fill="none" stroke="#F5CC00" stroke-width="0.9" /><polygon points="632.1,726.4 637.4,723.2 648.6,723.2 653.9,726.6 653.9,741.1 645.7,743.4 635.0,743.4 632.1,740.9" fill="#B4960F" stroke="#F5CC00" stroke-width="1.1" stroke-linejoin="round"/><polyline points="632.1,726.4 635.0,729.7 645.7,729.7 653.9,726.6" fill="none" stroke="#F5CC00" stroke-width="1.1"/><line x1="635.0" y1="729.7" x2="635.0" y2="743.4" stroke="#F5CC00" stroke-width="1.1" /><line x1="645.7" y1="729.7" x2="645.7" y2="743.4" stroke="#F5CC00" stroke-width="1.1" /><polygon points="645.7,729.7 653.9,726.6 653.9,741.1 645.7,743.4" fill="#C4A414" stroke="#F5CC00" stroke-width="1.1" /><polygon points="406.3,520.0 609.5,460.0 843.7,508.2 841.8,530.2 649.4,605.3 405.0,543.7" fill="rgba(25,47,108,0.46)" stroke="none" stroke-width="1" /><polygon points="649.4,580.3 843.7,508.2 841.8,530.2 649.4,605.3" fill="rgba(110,100,90,0.22)" stroke="none" stroke-width="1" /><polygon points="406.3,520.0 649.4,580.3 649.4,605.3 405.0,543.7" fill="rgba(25,47,108,0.06)" stroke="none" stroke-width="1" /><polygon points="453.0,518.0 468.9,518.0 470.2,557.0 454.3,557.0" fill="url(#gO)" stroke="none" stroke-width="1" opacity="0.55"/><polygon points="634.5,560.0 650.8,560.0 650.9,603.0 634.6,603.0" fill="url(#gYd)" stroke="none" stroke-width="1" opacity="0.6"/><polygon points="781.4,508.0 796.6,508.0 795.8,550.0 780.6,550.0" fill="url(#gYd)" stroke="none" stroke-width="1" opacity="0.6"/><polygon points="510.5,282.2 589.4,289.7 590.0,529.8 515.3,512.9" fill="url(#gFl)" stroke="none" stroke-width="1" /><polygon points="510.5,282.2 519.0,283.0 523.5,514.8 515.3,512.9" fill="rgba(40,50,90,0.10)" stroke="none" stroke-width="1" /><polygon points="589.4,289.5 609.0,284.8 609.0,520.4 590.0,527.5" fill="rgba(41,52,90,0.795)" stroke="none" stroke-width="1" /><polygon points="590.0,527.5 609.0,520.4 609.0,534.1 590.0,529.8" fill="rgba(25,47,108,0.46)" stroke="none" stroke-width="1" /><polygon points="608.4,263.9 643.5,267.8 643.5,276.6 609.0,284.8" fill="rgba(25,47,108,0.46)" stroke="none" stroke-width="1" /><polygon points="609.0,284.8 643.5,276.6 643.5,299.0 609.0,294.8" fill="rgba(41,52,90,0.795)" stroke="none" stroke-width="1" /><polygon points="609.0,294.8 643.5,299.0 643.5,495.3 609.0,488.0" fill="rgba(22,36,80,0.846)" stroke="none" stroke-width="1" /><polygon points="609.0,488.0 643.5,495.3 643.5,507.6 609.0,520.4" fill="rgba(41,52,90,0.795)" stroke="none" stroke-width="1" /><polygon points="609.0,520.4 643.5,507.6 643.5,541.9 609.0,534.1" fill="rgba(25,47,108,0.46)" stroke="none" stroke-width="1" /><polygon points="636.5,298.1 643.5,299.0 643.5,541.9 636.5,540.3" fill="rgba(20,25,60,0.16)" stroke="none" stroke-width="1" /><polygon points="643.5,267.8 659.6,269.6 659.6,272.7 643.5,276.6" fill="rgba(25,47,108,0.46)" stroke="none" stroke-width="1" /><polygon points="643.5,276.6 659.6,272.7 660.0,498.8 643.5,495.3" fill="rgba(41,52,90,0.795)" stroke="none" stroke-width="1" /><polygon points="643.5,495.3 660.0,498.8 660.0,501.5 643.5,507.6" fill="rgba(25,47,108,0.46)" stroke="none" stroke-width="1" /><polygon points="659.6,269.6 738.6,278.5 736.3,515.0 660.0,498.8" fill="url(#gFr)" stroke="none" stroke-width="1" /><polygon points="731.0,277.6 738.6,278.5 736.3,515.0 729.5,513.6" fill="rgba(40,50,90,0.12)" stroke="none" stroke-width="1" /><polyline points="515.3,512.9 510.5,282.2 580.7,288.7 589.4,289.7" fill="none" stroke="#3350A0" stroke-width="1"/><polyline points="512.0,284.3 576.0,291.5 589.4,292.4 643.5,299.0" fill="none" stroke="#3350A0" stroke-width="0.9"/><polyline points="589.4,294.5 636.5,300.8 643.5,299.0" fill="none" stroke="#3350A0" stroke-width="0.8"/><line x1="636.5" y1="300.5" x2="636.2" y2="540.2" stroke="#3350A0" stroke-width="0.8" /><polyline points="608.4,300.0 608.4,263.9 738.6,278.5 736.3,515.0" fill="none" stroke="#3350A0" stroke-width="1"/><polyline points="616.0,266.3 731.0,279.1 738.6,278.5" fill="none" stroke="#3350A0" stroke-width="0.8"/><line x1="616.0" y1="264.8" x2="617.3" y2="486.4" stroke="#3350A0" stroke-width="0.8" /><polyline points="589.4,289.5 659.6,272.7" fill="none" stroke="#3350A0" stroke-width="0.8"/><polyline points="591.0,293.0 661.0,275.5" fill="none" stroke="#3350A0" stroke-width="0.8"/><path d="M515.300 512.900 L573 526 Q583 528.500 591 525.200 L654 503.500 Q659.500 501 654 498.800 L621.500 489" fill="none" stroke="#3350A0" stroke-width="0.8"/><path d="M592.300 530.300 L636.200 540.200 L643.500 541.900 M600 527 L648 509.500" fill="none" stroke="#3350A0" stroke-width="0.8"/><path d="M664 499.500 L724 513 Q731 514.600 736.300 515 M622 486.800 L736 511" fill="none" stroke="#3350A0" stroke-width="0.8"/><polygon points="606.2,471.0 620.4,471.0 621.2,596.0 607.0,596.0" fill="url(#gYd)" stroke="none" stroke-width="1" opacity="0.72"/><g opacity="0.88"><ellipse cx="612.9" cy="473.2" rx="14.2" ry="3.8" fill="#C4A414" stroke="#F5CC00" stroke-width="1.1" /><ellipse cx="612.9" cy="471.4" rx="14.2" ry="3.8" fill="#C4A414" stroke="#F5CC00" stroke-width="1.1" /><ellipse cx="612.9" cy="470.5" rx="11.8" ry="3.1" fill="none" stroke="#F5CC00" stroke-width="0.9" /><polygon points="603.4,458.4 608.0,456.1 617.8,456.1 622.4,458.6 622.4,469.3 615.2,471.2 605.9,471.2 603.4,469.1" fill="#B4960F" stroke="#F5CC00" stroke-width="1.1" stroke-linejoin="round"/><polyline points="603.4,458.4 605.9,460.8 615.2,460.8 622.4,458.6" fill="none" stroke="#F5CC00" stroke-width="1.1"/><line x1="605.9" y1="460.8" x2="605.9" y2="471.2" stroke="#F5CC00" stroke-width="1.1" /><line x1="615.2" y1="460.8" x2="615.2" y2="471.2" stroke="#F5CC00" stroke-width="1.1" /><polygon points="615.2,460.8 622.4,458.6 622.4,469.3 615.2,471.2" fill="#C4A414" stroke="#F5CC00" stroke-width="1.1" /><polygon points="606.0,447.6 620.2,447.6 620.2,456.7 606.0,456.7" fill="url(#gY)" stroke="none" stroke-width="1" /><ellipse cx="613.1" cy="447.6" rx="7.1" ry="2.5" fill="#CDB040" stroke="#F5CC00" stroke-width="1.1" /></g><line x1="406.3" y1="520.0" x2="649.4" y2="580.3" stroke="#3354A8" stroke-width="1" /><line x1="649.4" y1="580.3" x2="843.7" y2="508.2" stroke="#3354A8" stroke-width="1" /><line x1="843.7" y1="508.2" x2="609.5" y2="460.0" stroke="#3354A8" stroke-width="1" /><line x1="609.5" y1="460.0" x2="406.3" y2="520.0" stroke="#3354A8" stroke-width="1" /><line x1="406.3" y1="520.0" x2="405.0" y2="543.7" stroke="#3354A8" stroke-width="1" /><line x1="649.4" y1="580.3" x2="649.4" y2="605.3" stroke="#3354A8" stroke-width="1" /><line x1="843.7" y1="508.2" x2="841.8" y2="530.2" stroke="#3354A8" stroke-width="1" /><line x1="405.0" y1="543.7" x2="610.6" y2="480.6" stroke="#3354A8" stroke-width="1" /><line x1="610.6" y1="480.6" x2="841.8" y2="530.2" stroke="#3354A8" stroke-width="1" /><line x1="610.6" y1="480.6" x2="609.5" y2="460.0" stroke="#3354A8" stroke-width="1" /><line x1="405.0" y1="543.7" x2="649.4" y2="605.3" stroke="#3354A8" stroke-width="1" /><line x1="649.4" y1="605.3" x2="841.8" y2="530.2" stroke="#3354A8" stroke-width="1" /><line x1="667.6" y1="493.2" x2="841.8" y2="530.2" stroke="#141C38" stroke-width="2.6" stroke-dasharray="9 7"/><line x1="841.8" y1="530.2" x2="656.3" y2="601.6" stroke="#141C38" stroke-width="2.6" stroke-dasharray="9 7" stroke-dashoffset="4"/><line x1="541.0" y1="501.0" x2="606.0" y2="482.0" stroke="#1F2A55" stroke-width="2.2" stroke-dasharray="8.500 7.500"/><line x1="510.0" y1="570.3" x2="646.0" y2="604.5" stroke="#F26B21" stroke-width="1.8" stroke-dasharray="7 6"/><line x1="405.0" y1="543.7" x2="455.2" y2="528.3" stroke="#0F3D24" stroke-width="2" /><path d="M500.900 513.200 L478.500 509.500 Q470 520 477 535.500 Z" fill="#15532F"/><ellipse cx="476.5" cy="522.6" rx="6.5" ry="13.0" fill="#1E6A3C" stroke="none" stroke-width="1" transform="rotate(18 476.500 522.600)"/><polygon points="500.9,513.2 480.0,508.7 486.0,507.8" fill="#0A1A10" stroke="none" stroke-width="1" /><line x1="405.0" y1="543.7" x2="468.0" y2="559.8" stroke="#F00000" stroke-width="2.4" /><path d="M507.200 569.600 L480.200 547.100 Q460.500 556.500 476 576.300 Z" fill="url(#gR)"/><polygon points="477.7,574.6 507.2,569.6 487.7,579.0" fill="#0A0A0A" stroke="none" stroke-width="1" /><line x1="405.3" y1="543.7" x2="402.7" y2="450.0" stroke="#0000B8" stroke-width="2.8" /><ellipse cx="401.8" cy="448.3" rx="14.8" ry="3.6" fill="#00008C" stroke="none" stroke-width="1" /><polygon points="400.3,406.1 387.0,448.2 416.6,448.2" fill="url(#gB)" stroke="none" stroke-width="1" /><line x1="489.0" y1="533.3" x2="547.9" y2="513.9" stroke="#101018" stroke-width="1" /><line x1="501.5" y1="513.2" x2="552.9" y2="525.8" stroke="#101018" stroke-width="1" /><polygon points="531.0,520.5 552.9,525.8 546.0,521.8" fill="#101018" stroke="none" stroke-width="1" /><line x1="490.3" y1="549.0" x2="557.9" y2="565.2" stroke="#101018" stroke-width="1" /><line x1="507.8" y1="569.6" x2="522.0" y2="563.6" stroke="#101018" stroke-width="1" /><polygon points="546.5,553.8 559.5,553.0 552.0,556.8 545.5,556.5" fill="#101018" stroke="none" stroke-width="1" /><ellipse cx="789.2" cy="509.7" rx="15.2" ry="4.1" fill="#C4A414" stroke="#F5CC00" stroke-width="1.1" /><ellipse cx="789.2" cy="507.8" rx="15.2" ry="4.1" fill="#C4A414" stroke="#F5CC00" stroke-width="1.1" /><ellipse cx="789.2" cy="506.9" rx="12.6" ry="3.3" fill="none" stroke="#F5CC00" stroke-width="0.9" /><polygon points="779.1,493.9 783.9,491.4 794.5,491.4 799.3,494.1 799.3,505.5 791.7,507.6 781.7,507.6 779.1,505.3" fill="#B4960F" stroke="#F5CC00" stroke-width="1.1" stroke-linejoin="round"/><polyline points="779.1,493.9 781.7,496.4 791.7,496.4 799.3,494.1" fill="none" stroke="#F5CC00" stroke-width="1.1"/><line x1="781.7" y1="496.4" x2="781.7" y2="507.6" stroke="#F5CC00" stroke-width="1.1" /><line x1="791.7" y1="496.4" x2="791.7" y2="507.6" stroke="#F5CC00" stroke-width="1.1" /><polygon points="791.7,496.4 799.3,494.1 799.3,505.5 791.7,507.6" fill="#C4A414" stroke="#F5CC00" stroke-width="1.1" /><polygon points="781.9,482.6 797.1,482.6 797.1,492.0 781.9,492.0" fill="url(#gY)" stroke="none" stroke-width="1" /><ellipse cx="789.5" cy="482.6" rx="7.6" ry="2.7" fill="#CDB040" stroke="#F5CC00" stroke-width="1.1" /><ellipse cx="461.1" cy="520.3" rx="15.9" ry="4.3" fill="#B4622E" stroke="#F67A22" stroke-width="1.1" /><ellipse cx="461.1" cy="518.3" rx="15.9" ry="4.3" fill="#B4622E" stroke="#F67A22" stroke-width="1.1" /><ellipse cx="461.1" cy="517.3" rx="13.2" ry="3.5" fill="none" stroke="#F67A22" stroke-width="0.9" /><polygon points="450.5,503.8 455.6,501.1 466.6,501.1 471.7,504.0 471.7,515.9 463.7,518.1 453.3,518.1 450.5,515.7" fill="#A9592A" stroke="#F67A22" stroke-width="1.1" stroke-linejoin="round"/><polyline points="450.5,503.8 453.3,506.4 463.7,506.4 471.7,504.0" fill="none" stroke="#F67A22" stroke-width="1.1"/><line x1="453.3" y1="506.4" x2="453.3" y2="518.1" stroke="#F67A22" stroke-width="1.1" /><line x1="463.7" y1="506.4" x2="463.7" y2="518.1" stroke="#F67A22" stroke-width="1.1" /><polygon points="463.7,506.4 471.7,504.0 471.7,515.9 463.7,518.1" fill="#B4622E" stroke="#F67A22" stroke-width="1.1" /><polygon points="452.1,491.8 467.9,491.8 467.9,501.8 452.1,501.8" fill="url(#gO)" stroke="none" stroke-width="1" /><ellipse cx="460.0" cy="491.8" rx="8.0" ry="2.8" fill="#C5845A" stroke="#F67A22" stroke-width="1.1" /><ellipse cx="642.6" cy="562.4" rx="16.3" ry="4.4" fill="#C4A414" stroke="#F5CC00" stroke-width="1.1" /><ellipse cx="642.6" cy="560.4" rx="16.3" ry="4.4" fill="#C4A414" stroke="#F5CC00" stroke-width="1.1" /><ellipse cx="642.6" cy="559.4" rx="13.5" ry="3.6" fill="none" stroke="#F5CC00" stroke-width="0.9" /><polygon points="631.7,545.5 637.0,542.8 648.2,542.8 653.5,545.7 653.5,557.9 645.3,560.2 634.6,560.2 631.7,557.7" fill="#B4960F" stroke="#F5CC00" stroke-width="1.1" stroke-linejoin="round"/><polyline points="631.7,545.5 634.6,548.2 645.3,548.2 653.5,545.7" fill="none" stroke="#F5CC00" stroke-width="1.1"/><line x1="634.6" y1="548.2" x2="634.6" y2="560.2" stroke="#F5CC00" stroke-width="1.1" /><line x1="645.3" y1="548.2" x2="645.3" y2="560.2" stroke="#F5CC00" stroke-width="1.1" /><polygon points="645.3,548.2 653.5,545.7 653.5,557.9 645.3,560.2" fill="#C4A414" stroke="#F5CC00" stroke-width="1.1" /><polygon points="634.5,534.0 650.8,534.0 650.8,543.5 634.5,543.5" fill="url(#gY)" stroke="none" stroke-width="1" /><ellipse cx="642.6" cy="534.0" rx="8.2" ry="2.9" fill="#CDB040" stroke="#F5CC00" stroke-width="1.1" /><rect x="513.4" y="496.3" width="9.4" height="11.0" fill="rgba(232,236,244,0.92)"/><text x="518.1" y="504.7" font-size="11.5" text-anchor="middle" fill="#000" font-family="Liberation Sans, sans-serif">4</text><rect x="514.0" y="503.2" width="25.7" height="14.4" fill="rgba(232,236,244,0.92)"/><text x="526.9" y="515.0" font-size="11.5" text-anchor="middle" fill="#000" font-family="Liberation Sans, sans-serif">0.05</text><rect x="520.3" y="550.2" width="25.7" height="14.4" fill="rgba(232,236,244,0.92)"/><text x="533.1" y="562.0" font-size="11.5" text-anchor="middle" fill="#000" font-family="Liberation Sans, sans-serif">0.05</text><rect x="521.5" y="563.5" width="8.5" height="11.0" fill="rgba(232,236,244,0.75)"/><text x="525.8" y="571.9" font-size="11.5" text-anchor="middle" fill="#F26B21" font-family="Liberation Sans, sans-serif">1</text><rect x="720.3" y="490.0" width="10.0" height="14.5" fill="rgba(232,236,244,0.92)"/><text x="725.3" y="501.9" font-size="11.5" text-anchor="middle" fill="#000" font-family="Liberation Sans, sans-serif">3</text><rect x="751.0" y="551.2" width="10.0" height="14.7" fill="rgba(232,236,244,0.92)"/><text x="756.0" y="563.3" font-size="11.5" text-anchor="middle" fill="#000" font-family="Liberation Sans, sans-serif">2</text></g></svg>
<div class="t" style="left:818.0px;top:5.0px;font-size:13.5px;color:#fff;letter-spacing:-0.146px;">ValidaceUshape.ideaDet</div><div class="t" style="left:420.0px;top:35.4px;font-size:15.5px;color:#fff;letter-spacing:-1.392px;">PROJECT</div><div class="t" style="left:523.4px;top:35.4px;font-size:15.5px;color:#F26B21;letter-spacing:-0.724px;">DESIGN</div><div class="t" style="left:619.0px;top:35.4px;font-size:15.5px;color:#fff;letter-spacing:-1.295px;">CHECK</div><div class="t" style="left:707.5px;top:35.4px;font-size:15.5px;color:#fff;letter-spacing:-1.521px;">REPORT</div><div class="t" style="left:803.0px;top:35.4px;font-size:15.5px;color:#fff;letter-spacing:-0.789px;">MATERIALS</div><div class="t" style="left:28.5px;top:21.3px;font-size:20.5px;color:#000;font-weight:700;font-style:italic;letter-spacing:3.379px;-webkit-text-stroke:2.200px #000;">IDEA</div><div class="t" style="left:97.5px;top:21.2px;font-size:21.5px;color:#fff;font-weight:700;font-style:italic;letter-spacing:0.387px;">StatiCa</div><div class="t" style="left:176.0px;top:14.5px;font-size:8px;color:#fff;letter-spacing:2.094px;">®</div><div class="t" style="left:192.0px;top:24.7px;font-size:15.5px;color:#fff;letter-spacing:-0.938px;">DETAIL</div><div class="t" style="left:1700.8px;top:36.4px;font-size:12.5px;color:#8a8a8a;letter-spacing:-0.372px;">Search on ideastatica.com</div><div class="t" style="left:10.5px;top:73.2px;font-size:12.5px;color:#fff;letter-spacing:-1.230px;">DRM1</div><div class="t" style="left:81.5px;top:102.6px;font-size:12.5px;color:#000;letter-spacing:-0.537px;">New</div><div class="t" style="left:117.6px;top:102.6px;font-size:12.5px;color:#000;letter-spacing:-0.447px;">Copy</div><div class="t" style="left:159.3px;top:102.6px;font-size:12.5px;color:#000;letter-spacing:-0.373px;">Undo</div><div class="t" style="left:198.4px;top:102.6px;font-size:12.5px;color:#C4C4C4;letter-spacing:-0.973px;">Redo</div><div class="t" style="left:238.1px;top:102.6px;font-size:12.5px;color:#000;letter-spacing:-1.098px;">Save</div><div class="t" style="left:278.2px;top:100.6px;font-size:12.5px;color:#000;letter-spacing:-1.010px;">Edges</div><div class="t" style="left:276.6px;top:115.9px;font-size:12.5px;color:#000;letter-spacing:-0.706px;">names</div><div class="t" style="left:315.3px;top:100.6px;font-size:12.5px;color:#000;letter-spacing:-0.329px;">Dimension</div><div class="t" style="left:332.3px;top:115.9px;font-size:12.5px;color:#000;letter-spacing:-0.463px;">lines</div><div class="t" style="left:381.4px;top:100.6px;font-size:12.5px;color:#000;letter-spacing:-0.985px;">Rebars</div><div class="t" style="left:425.2px;top:100.6px;font-size:12.5px;color:#000;letter-spacing:-0.556px;">Grid</div><div class="t" style="left:466.6px;top:102.6px;font-size:12.5px;color:#000;letter-spacing:-0.670px;">New</div><div class="t" style="left:499.7px;top:102.6px;font-size:12.5px;color:#000;letter-spacing:-0.658px;">Gallery</div><div class="t" style="left:545.4px;top:102.6px;font-size:12.5px;color:#000;letter-spacing:-0.509px;">Settings</div><div class="t" style="left:592.5px;top:102.6px;font-size:12.5px;color:#000;letter-spacing:-0.436px;">Calculate</div><div class="t" style="left:651.8px;top:102.6px;font-size:12.5px;color:#000;letter-spacing:-0.804px;">Create</div><div class="t" style="left:691.2px;top:102.6px;font-size:12.5px;color:#000;letter-spacing:-0.175px;">Apply</div><div class="t" style="left:752.3px;top:70.8px;font-size:12.5px;color:#000;letter-spacing:-0.378px;">Manager</div><div class="t" style="left:752.3px;top:94.5px;font-size:12.5px;color:#000;letter-spacing:-1.198px;">Save</div><div class="t" style="left:752.3px;top:118.9px;font-size:12.5px;color:#000;letter-spacing:-0.623px;">Open</div><div class="t" style="left:810.4px;top:102.6px;font-size:12.5px;color:#000;letter-spacing:-0.250px;">Model</div><div class="t" style="left:813.8px;top:117.9px;font-size:12.5px;color:#000;letter-spacing:-0.148px;">entity</div><div class="t" style="left:849.5px;top:102.6px;font-size:12.5px;color:#C4C4C4;letter-spacing:-0.345px;">Operation</div><div class="t" style="left:911.3px;top:102.6px;font-size:12.5px;color:#000;letter-spacing:-0.703px;">Load</div><div class="t" style="left:913.3px;top:117.9px;font-size:12.5px;color:#000;letter-spacing:-1.002px;">case</div><div class="t" style="left:945.4px;top:102.6px;font-size:12.5px;color:#000;letter-spacing:-0.099px;">Combination</div><div class="t" style="left:1030.2px;top:102.6px;font-size:12.5px;color:#000;letter-spacing:-0.871px;">Rebar</div><div class="t" style="left:1021.5px;top:117.9px;font-size:12.5px;color:#000;letter-spacing:-0.587px;">assembly</div><div class="t" style="left:1083.3px;top:102.6px;font-size:12.5px;color:#C4C4C4;letter-spacing:-1.537px;">DXF</div><div class="t" style="left:1076.3px;top:117.9px;font-size:12.5px;color:#C4C4C4;letter-spacing:-0.006px;">Import</div><div class="t" style="left:42.0px;top:142.6px;font-size:12.5px;color:#000;letter-spacing:-0.281px;">Project items</div><div class="t" style="left:200.4px;top:142.6px;font-size:12.5px;color:#000;letter-spacing:-0.929px;">Data</div><div class="t" style="left:308.3px;top:142.6px;font-size:12.5px;color:#000;letter-spacing:-0.740px;">Labels</div><div class="t" style="left:403.5px;top:142.6px;font-size:12.5px;color:#000;letter-spacing:-0.693px;">Draw</div><div class="t" style="left:477.0px;top:142.6px;font-size:12.5px;color:#000;letter-spacing:-0.432px;">Pictures</div><div class="t" style="left:563.5px;top:142.6px;font-size:12.5px;color:#000;letter-spacing:-0.286px;">Calculation</div><div class="t" style="left:699.5px;top:142.6px;font-size:12.5px;color:#000;letter-spacing:-0.430px;">Templates</div><div class="t" style="left:950.4px;top:142.6px;font-size:12.5px;color:#000;letter-spacing:-0.570px;">New</div><div class="t" style="left:8.0px;top:1125.9px;font-size:12.5px;color:#fff;letter-spacing:-0.659px;z-index:10;">Design Code: EN</div><div class="t" style="left:111.2px;top:1125.9px;font-size:12.5px;color:#fff;letter-spacing:-0.250px;z-index:10;">Rounding: Metric</div><div class="t" style="left:218.2px;top:1125.9px;font-size:12.5px;color:#fff;letter-spacing:-0.327px;z-index:10;">Presentation Units: Metric</div><div class="t" style="left:1333.9px;top:165.7px;font-size:12.5px;color:#fff;font-weight:700;letter-spacing:-0.737px;">AN1</div><div class="t" style="left:1368.0px;top:165.7px;font-size:12.5px;color:#fff;letter-spacing:-0.147px;">[Anchorage]</div><div class="t" style="left:1768.2px;top:165.7px;font-size:12.5px;color:#fff;font-weight:700;letter-spacing:0.029px;">New</div><div class="t" style="left:1814.0px;top:165.7px;font-size:12.5px;color:#fff;font-weight:700;letter-spacing:-1.066px;">Copy</div><div class="t" style="left:1861.3px;top:165.7px;font-size:12.5px;color:#fff;font-weight:700;letter-spacing:0.062px;">Delete</div><div class="t" style="left:1358.3px;top:199.8px;font-size:12.5px;color:#333;font-weight:700;letter-spacing:-0.629px;">Single Anchor</div><div class="t" style="left:1358.3px;top:224.5px;font-size:12.5px;color:#333;letter-spacing:-0.340px;">Installation process</div><div class="t" style="left:1531.2px;top:223.8px;font-size:12.5px;color:#000;letter-spacing:-0.312px;">Cast-in place</div><div class="t" style="left:1358.3px;top:248.7px;font-size:12.5px;color:#333;letter-spacing:-0.174px;">Anchor type</div><div class="t" style="left:1531.2px;top:248.0px;font-size:12.5px;color:#000;letter-spacing:-0.441px;">Washer plate</div><div class="t" style="left:1358.3px;top:272.8px;font-size:12.5px;color:#333;letter-spacing:-0.167px;">Φ - Diameter [mm]</div><div class="t" style="left:1529.9px;top:273.0px;font-size:12.5px;color:#000;letter-spacing:-0.836px;">20.0</div><div class="t" style="left:1358.3px;top:296.6px;font-size:12.5px;color:#333;letter-spacing:-0.271px;">Material</div><div class="t" style="left:1531.2px;top:295.9px;font-size:12.5px;color:#000;letter-spacing:-1.215px;">S 355</div><div class="t" style="left:1358.3px;top:320.7px;font-size:12.5px;color:#333;letter-spacing:-0.384px;">Cut threads</div><div class="t" style="left:1358.3px;top:355.8px;font-size:12.5px;color:#333;font-weight:700;letter-spacing:-0.360px;">Interconnection with a base plate</div><div class="t" style="left:1358.3px;top:380.8px;font-size:12.5px;color:#333;letter-spacing:-0.311px;">Active for axial forces transfer</div><div class="t" style="left:1358.3px;top:404.6px;font-size:12.5px;color:#333;letter-spacing:-0.324px;">Active for shear transfer</div><div class="t" style="left:1358.3px;top:439.5px;font-size:12.5px;color:#333;font-weight:700;letter-spacing:-0.245px;">Geometry</div><div class="t" style="left:1358.3px;top:464.8px;font-size:12.5px;color:#333;letter-spacing:-0.257px;">L1 [m]</div><div class="t" style="left:1529.9px;top:465.0px;font-size:12.5px;color:#000;letter-spacing:-0.909px;">0.03</div><div class="t" style="left:1358.3px;top:488.6px;font-size:12.5px;color:#333;letter-spacing:-0.257px;">L2 [m]</div><div class="t" style="left:1529.9px;top:488.8px;font-size:12.5px;color:#000;letter-spacing:-0.909px;">0.20</div><div class="t" style="left:1358.3px;top:512.7px;font-size:12.5px;color:#333;letter-spacing:-0.512px;">Washer plate shape</div><div class="t" style="left:1531.2px;top:512.0px;font-size:12.5px;color:#000;letter-spacing:-0.410px;">Rectangular</div><div class="t" style="left:1358.3px;top:536.5px;font-size:12.5px;color:#333;letter-spacing:-0.365px;">Washer plate size [mm]</div><div class="t" style="left:1530.2px;top:536.7px;font-size:12.5px;color:#000;letter-spacing:-1.009px;">50</div><div class="t" style="left:1358.3px;top:560.6px;font-size:12.5px;color:#333;letter-spacing:-0.289px;">Washer plate thickness [mm]</div><div class="t" style="left:1530.2px;top:560.8px;font-size:12.5px;color:#000;letter-spacing:-1.009px;">10</div><div class="t" style="left:1358.3px;top:595.7px;font-size:12.5px;color:#333;font-weight:700;letter-spacing:-0.764px;">Position</div><div class="t" style="left:1358.3px;top:620.4px;font-size:12.5px;color:#333;letter-spacing:-0.213px;">M - Master</div><div class="t" style="left:1531.2px;top:619.7px;font-size:12.5px;color:#000;letter-spacing:-1.509px;">BP1</div><div class="t" style="left:1358.3px;top:644.5px;font-size:12.5px;color:#333;letter-spacing:-0.498px;">Related to</div><div class="t" style="left:1531.2px;top:643.8px;font-size:12.5px;color:#000;letter-spacing:-0.799px;">Edge</div><div class="t" style="left:1358.3px;top:668.7px;font-size:12.5px;color:#333;letter-spacing:-0.874px;">Edge</div><div class="t" style="left:1532.1px;top:668.0px;font-size:12.5px;color:#000;letter-spacing:-1.600px;">1</div><div class="t" style="left:1358.3px;top:692.8px;font-size:12.5px;color:#333;letter-spacing:-0.172px;">X - Position [m]</div><div class="t" style="left:1529.9px;top:693.0px;font-size:12.5px;color:#000;letter-spacing:-0.836px;">0.05</div><div class="t" style="left:1358.3px;top:716.8px;font-size:12.5px;color:#333;letter-spacing:-0.158px;">Y - Position [m]</div><div class="t" style="left:1529.9px;top:717.0px;font-size:12.5px;color:#000;letter-spacing:-0.836px;">0.05</div><div class="t" style="left:1153.4px;top:290.7px;font-size:12.5px;color:#333;font-weight:700;letter-spacing:-0.455px;z-index:7;">DRM1</div><div class="t" style="left:1174.3px;top:312.6px;font-size:12.5px;color:#333;font-weight:700;letter-spacing:-0.356px;z-index:7;">Members</div><div class="t" style="left:1174.3px;top:334.6px;font-size:12.5px;color:#333;letter-spacing:-1.600px;z-index:7;">SB1</div><div class="t" style="left:1174.3px;top:356.8px;font-size:12.5px;color:#333;font-weight:700;letter-spacing:-0.520px;z-index:7;">Supports</div><div class="t" style="left:1174.3px;top:378.6px;font-size:12.5px;color:#333;letter-spacing:-1.600px;z-index:7;">SS1</div><div class="t" style="left:1174.3px;top:400.8px;font-size:12.5px;color:#333;font-weight:700;letter-spacing:-0.548px;z-index:7;">Transfer devices</div><div class="t" style="left:1174.3px;top:422.6px;font-size:12.5px;color:#333;letter-spacing:-1.600px;z-index:7;">BP1</div><div class="t" style="left:1174.3px;top:444.6px;font-size:12.5px;color:#fff;letter-spacing:-0.873px;z-index:7;">AN1</div><div class="t" style="left:1174.3px;top:466.3px;font-size:12.5px;color:#333;letter-spacing:-0.642px;z-index:7;">AN2</div><div class="t" style="left:1174.3px;top:488.5px;font-size:12.5px;color:#333;letter-spacing:-0.642px;z-index:7;">AN3</div><div class="t" style="left:1174.3px;top:510.7px;font-size:12.5px;color:#333;letter-spacing:-0.642px;z-index:7;">AN4</div><div class="t" style="left:1174.3px;top:532.6px;font-size:12.5px;color:#333;font-weight:700;letter-spacing:-0.454px;z-index:7;">Loads and Combin...</div><div class="t" style="left:1195.3px;top:554.8px;font-size:12.5px;color:#333;font-weight:700;letter-spacing:-0.871px;z-index:7;">Load cases</div><div class="t" style="left:1195.3px;top:576.8px;font-size:12.5px;color:#333;letter-spacing:-1.600px;z-index:7;">LC1</div><div class="t" style="left:1195.3px;top:598.7px;font-size:12.5px;color:#333;letter-spacing:-1.414px;z-index:7;">LC2</div><div class="t" style="left:1195.3px;top:620.6px;font-size:12.5px;color:#333;font-weight:700;letter-spacing:-0.582px;z-index:7;">ULS Combinations</div><div class="t" style="left:1217.9px;top:645.0px;font-size:12.5px;color:#333;letter-spacing:-1.540px;z-index:7;">C1</div><div class="t" style="left:1174.3px;top:664.7px;font-size:12.5px;color:#333;font-weight:700;letter-spacing:-0.463px;z-index:7;">Reinforcements</div><div class="t" style="left:1195.3px;top:686.9px;font-size:12.5px;color:#333;font-weight:700;letter-spacing:-0.510px;z-index:7;">Group of Bars</div><div class="t" style="left:1217.9px;top:710.5px;font-size:12.5px;color:#333;letter-spacing:-1.038px;z-index:7;">GB3D1</div><div class="t" style="left:1217.9px;top:733.2px;font-size:12.5px;color:#333;letter-spacing:-0.938px;z-index:7;">GB3D2</div><div class="t" style="left:1217.9px;top:754.6px;font-size:12.5px;color:#333;letter-spacing:-0.938px;z-index:7;">GB3D3</div><div class="t" style="left:1217.9px;top:777.1px;font-size:12.5px;color:#333;letter-spacing:-0.938px;z-index:7;">GB3D4</div>
</body></html>
